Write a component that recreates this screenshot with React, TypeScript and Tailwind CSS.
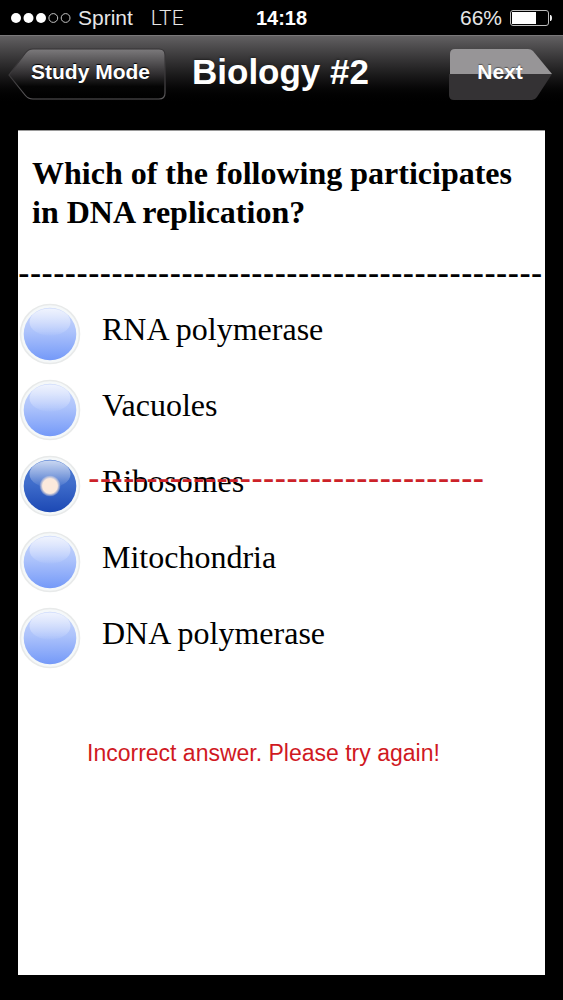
import { useState } from "react";

const sans = "font-['Liberation_Sans',Arial,sans-serif]";
const serif = "font-['Liberation_Serif','Times_New_Roman',serif]";

const options = ["RNA polymerase", "Vacuoles", "Ribosomes", "Mitochondria", "DNA polymerase"];

function StatusBar() {
  return (
    <div className="grid h-[35px] grid-cols-3 items-center bg-black px-[11px] text-[21px] leading-[24px] text-[#e6e6e6]">
      <div className="flex items-center whitespace-nowrap">
        <svg className="mr-[7px] h-3 w-[60px] shrink-0" viewBox="0 0 60 12" aria-hidden="true">
          <circle cx="5" cy="6" r="5" fill="#fff" />
          <circle cx="17.5" cy="6" r="5" fill="#fff" />
          <circle cx="30" cy="6" r="5" fill="#fff" />
          <circle cx="42.3" cy="6" r="4.4" fill="none" stroke="#c4c4c4" />
          <circle cx="54.6" cy="6" r="4.4" fill="none" stroke="#c4c4c4" />
        </svg>
        <span>Sprint</span>
        <span className="ml-[18px] font-[Roboto,sans-serif] font-light">LTE</span>
      </div>
      <time className="text-center text-[20px] font-bold text-white">14:18</time>
      <div className="flex items-center justify-end">
        <span>66%</span>
        <svg className="ml-[7px] h-[18px] w-[43px] shrink-0" viewBox="0 0 43 18" aria-hidden="true">
          <rect x="1.5" y="1.5" width="38" height="15" rx="2.5" fill="none" stroke="#bdbdbd" />
          <rect x="3" y="3" width="24" height="12" fill="#fff" />
          <path d="M41 6h.8q1.2.6 1.2 3t-1.2 3H41z" fill="#eee" />
        </svg>
      </div>
    </div>
  );
}

function NavBar() {
  return (
    <header className="grid h-[95px] grid-cols-[1fr_auto_1fr] items-start border-t border-[#7a787a] bg-linear-to-b from-[#626062] to-black to-75% pt-3 pr-[10px] pl-[8px] text-white">
      <button type="button" className="grid h-[52px] w-[158px] shrink-0 text-[21px] font-bold">
        <svg className="col-start-1 row-start-1 h-[52px] w-[158px]" viewBox="0 0 158 52" aria-hidden="true">
          <defs>
            <linearGradient id="back" x1="0" y1="0" x2="0" y2="1">
              <stop offset="0" stopColor="#7c7a7c" />
              <stop offset="0.5" stopColor="#302e30" />
              <stop offset="0.75" stopColor="#050505" />
              <stop offset="1" stopColor="#000" />
            </linearGradient>
            <linearGradient id="edge" x1="0" y1="0" x2="0" y2="1">
              <stop offset="0" stopColor="#353335" />
              <stop offset="0.6" stopColor="#3c3a3c" />
              <stop offset="1" stopColor="#5c5a5c" />
            </linearGradient>
          </defs>
          <path
            d="M1 27 17 5.5Q20 1 25 1H151Q157 1 157 7V45Q157 51 151 51H25Q20 51 17 47Z"
            fill="url(#back)"
            stroke="url(#edge)"
            strokeWidth="1.2"
          />
        </svg>
        <span className="col-start-1 row-start-1 self-center justify-self-end pr-4 pb-1 [text-shadow:0_-1px_1px_#000]">
          Study Mode
        </span>
      </button>
      <h1 className="pt-1 text-[35px] leading-[40px] font-bold [text-shadow:0_-1px_2px_#222]">Biology #2</h1>
      <button type="button" className="grid h-[52px] w-[104px] shrink-0 justify-self-end text-[21px] font-bold">
        <svg className="col-start-1 row-start-1 h-[52px] w-[104px]" viewBox="0 0 104 52" aria-hidden="true">
          <path d="M1 26V6Q1 1 6 1H79Q82 1 84 3L103 26Z" fill="#979597" />
          <path d="M0 26H103L88 49Q86 52 83 52H5Q0 52 0 47Z" fill="#343234" />
        </svg>
        <span className="col-start-1 row-start-1 self-center justify-self-center pr-0.5 pb-1 [text-shadow:0_-1px_1px_#555]">
          Next
        </span>
      </button>
    </header>
  );
}

function OrbDefs() {
  return (
    <svg className="absolute size-0" aria-hidden="true">
      <defs>
        <linearGradient id="orb-off" x1="0" y1="0" x2="0" y2="1">
          <stop offset="0" stopColor="#cbd8fb" />
          <stop offset="0.45" stopColor="#adc3fb" />
          <stop offset="1" stopColor="#7499f8" />
        </linearGradient>
        <linearGradient id="orb-on" x1="0" y1="0" x2="0" y2="1">
          <stop offset="0" stopColor="#4f7bd2" />
          <stop offset="0.45" stopColor="#3f6dcb" />
          <stop offset="1" stopColor="#1c48b4" />
        </linearGradient>
        <linearGradient id="gloss" x1="0" y1="0" x2="0" y2="1">
          <stop offset="0" stopColor="#fff" stopOpacity="0.7" />
          <stop offset="1" stopColor="#fff" stopOpacity="0.03" />
        </linearGradient>
        <radialGradient id="dot">
          <stop offset="0.7" stopColor="#fbe9dc" />
          <stop offset="1" stopColor="#fbe9dc" stopOpacity="0.1" />
        </radialGradient>
      </defs>
    </svg>
  );
}

function Orb({ on }: { on: boolean }) {
  return (
    <svg className="pointer-events-none col-start-1 row-start-1 size-[62px]" viewBox="0 0 62 62" aria-hidden="true">
      <circle cx="31" cy="31" r="29.5" fill="#f5f8f9" stroke="#e8eaea" strokeWidth="1.6" />
      <circle cx="31" cy="31" r="26.3" fill={on ? "url(#orb-on)" : "url(#orb-off)"} />
      <ellipse cx="31" cy="19" rx="20.5" ry="13.5" fill="url(#gloss)" />
      {on && <circle cx="31" cy="31" r="10.5" fill="url(#dot)" />}
    </svg>
  );
}

export default function App() {
  const [selected, setSelected] = useState("Ribosomes");

  return (
    <div className={`flex min-h-screen flex-col bg-black ${sans}`}>
      <StatusBar />
      <NavBar />
      <main className="mr-[18px] mb-[25px] ml-[18px] flex-1 border-t border-[#9a9a9a] bg-white text-black">
        <OrbDefs />
        <h2 className={`pt-[23px] pl-[14px] text-[32px] leading-[39px] font-bold ${serif}`}>
          Which of the following participates in DNA replication?
        </h2>
        <div className="mt-[21px] overflow-hidden text-[35px] leading-[40px] whitespace-nowrap" aria-hidden="true">
          {"-".repeat(45)}
        </div>
        <fieldset className="mt-[10px]" aria-label="Answers">
          {options.map((option) => (
            <label key={option} className="relative flex h-19 items-start pl-px">
              <span className="grid">
                <input
                  type="radio"
                  name="answer"
                  value={option}
                  checked={selected === option}
                  onChange={() => setSelected(option)}
                  className="col-start-1 row-start-1 size-[62px] appearance-none rounded-full"
                />
                <Orb on={selected === option} />
              </span>
              <span className={`pt-2 pl-[21px] text-[32px] leading-[36px] ${serif}`}>{option}</span>
              {selected === option && (
                <span
                  className="absolute top-[3px] left-[70px] text-[35px] leading-[40px] whitespace-nowrap text-[#cc2229]"
                  aria-hidden="true"
                >
                  {"-".repeat(34)}
                </span>
              )}
            </label>
          ))}
        </fieldset>
        <p role="status" className="mt-14 pl-[69px] text-[23px] leading-[28px] text-[#d0191f]">
          Incorrect answer. Please try again!
        </p>
      </main>
    </div>
  );
}
